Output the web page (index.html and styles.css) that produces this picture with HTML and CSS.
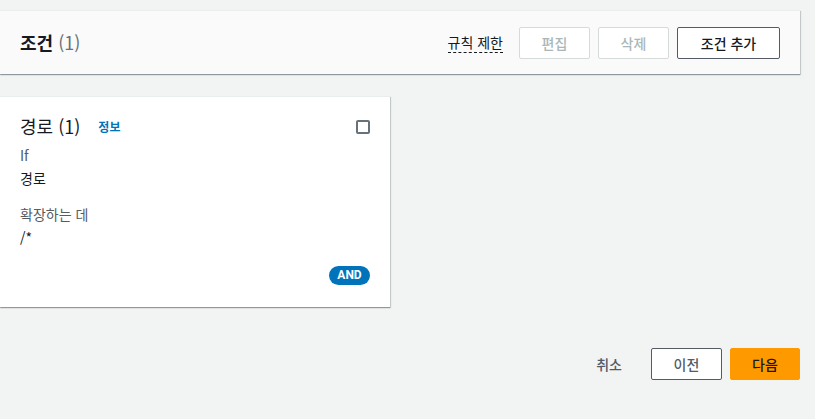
FILE: index.html
```html
<!DOCTYPE html>
<html lang="ko">
<head>
<meta charset="utf-8">
<link rel="stylesheet" href="styles.css">
</head>
<body>
<div class="page">
  <header class="panel">
    <h2 class="title">조건 <span class="count">(1)</span></h2>
    <div class="actions">
      <span class="limit">규칙 제한</span>
      <button class="btn btn-disabled">편집</button>
      <button class="btn btn-disabled">삭제</button>
      <button class="btn btn-normal btn-add">조건 추가</button>
    </div>
  </header>

  <section class="card">
    <div class="card-head">
      <h3 class="card-title">경로 (1) <a class="info">정보</a></h3>
      <span class="checkbox"></span>
    </div>
    <div class="label">If</div>
    <div class="value">경로</div>
    <div class="label label-gap">확장하는 데</div>
    <div class="value">/*</div>
    <div class="card-foot"><span class="badge">AND</span></div>
  </section>

  <footer class="footer">
    <span class="cancel">취소</span>
    <button class="btn btn-normal">이전</button>
    <button class="btn btn-primary">다음</button>
  </footer>
</div>
</body>
</html>
```

FILE: styles.css
```css
html, body {
  margin: 0;
  padding: 0;
  background: #f2f3f3;
  font-family: "Noto Sans CJK KR", Roboto, "Liberation Sans", sans-serif;
  color: #16191f;
}
.page {
  width: 800px;
  padding-top: 10px;
}
.panel {
  height: 64px;
  box-sizing: border-box;
  background: #fafafa;
  border-top: 1px solid #eaeded;
  box-shadow: 0 1px 1px 0 rgba(0, 28, 36, 0.3), 1px 1px 1px 0 rgba(0, 28, 36, 0.15);
  display: flex;
  align-items: center;
  justify-content: space-between;
  padding: 0 20px 2px 20px;
}
.title {
  margin: 0;
  font-size: 18px;
  font-weight: 700;
  line-height: 22px;
}
.count {
  font-weight: 400;
  color: #687078;
}
.actions {
  display: flex;
  align-items: center;
  margin-top: 2px;
}
.limit {
  font-size: 14px;
  line-height: 18px;
  color: #16191f;
  border-bottom: 1px dashed #16191f;
  margin-right: 16px;
  padding-bottom: 1px;
}
.btn {
  box-sizing: border-box;
  height: 32px;
  width: 71px;
  border-radius: 2px;
  font-family: "Noto Sans CJK KR", Roboto, sans-serif;
  font-size: 14px;
  font-weight: 500;
  padding: 0;
  background: #fff;
  cursor: pointer;
}
.btn + .btn { margin-left: 8px; }
.btn-disabled {
  border: 1px solid #d5dbdb;
  color: #aab7b8;
}
.btn-normal {
  border: 1px solid #545b64;
  color: #545b64;
}
.btn-add {
  width: 103px;
  color: #16191f;
}
.card {
  margin-top: 22px;
  width: 390px;
  height: 211px;
  box-sizing: border-box;
  background: #fff;
  border-top: 1px solid #eaeded;
  box-shadow: 0 1px 1px 0 rgba(0, 28, 36, 0.3), 1px 1px 1px 0 rgba(0, 28, 36, 0.15);
  padding: 16px 20px 0 20px;
  display: flex;
  flex-direction: column;
}
.card-head {
  display: flex;
  justify-content: space-between;
  align-items: center;
  height: 26px;
}
.card-title {
  margin: 0;
  font-size: 18px;
  font-weight: 400;
  line-height: 22px;
}
.info {
  font-size: 12px;
  font-weight: 700;
  color: #0073bb;
  margin-left: 13px;
  vertical-align: 2px;
}
.checkbox {
  width: 14px;
  height: 14px;
  box-sizing: border-box;
  border: 2px solid #687078;
  border-radius: 2px;
  margin-top: 2px;
}
.label {
  font-size: 14px;
  line-height: 20px;
  color: #545b64;
  margin-top: 6px;
}
.label-gap { margin-top: 15px; }
.value {
  font-size: 14px;
  line-height: 22px;
  margin-top: 2px;
}
.card-foot {
  display: flex;
  justify-content: flex-end;
  margin-top: 18px;
}
.badge {
  background: #0073bb;
  color: #fff;
  font-family: Roboto, "Liberation Sans", sans-serif;
  font-size: 12px;
  font-weight: 700;
  line-height: 19px;
  height: 19px;
  width: 41px;
  text-align: center;
  border-radius: 10px;
}
.footer {
  margin-top: 41px;
  display: flex;
  justify-content: flex-end;
  align-items: center;
}
.cancel {
  font-size: 14px;
  font-weight: 500;
  color: #545b64;
  margin-right: 29px;
}
.btn-primary {
  width: 70px;
  border: 1px solid #ff9900;
  background: #ff9900;
  color: #16191f;
}
```
